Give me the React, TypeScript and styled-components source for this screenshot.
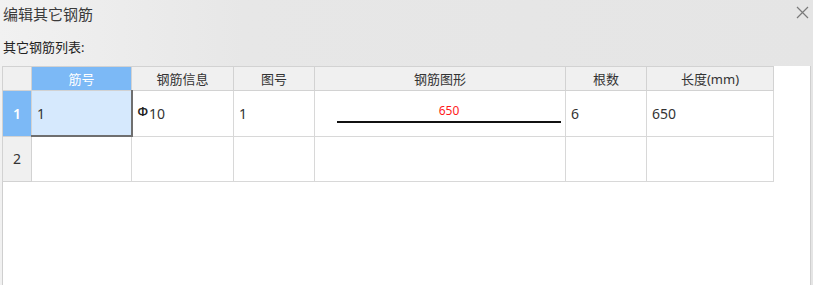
import React from "react";
import styled, { createGlobalStyle } from "styled-components";

const GlobalStyle = createGlobalStyle`
  html, body {
    margin: 0;
    padding: 0;
    background: #e6e6e6;
  }
  body {
    font-family: "Noto Sans", "Noto Sans CJK SC", sans-serif;
    color: #333;
  }
`;

type Row = {
  no: string;
  bar: string;
  grade?: boolean;
  fig: string;
  shape?: string;
  count: string;
  length: string;
};

const rows: Row[] = [
  { no: "1", bar: "10", grade: true, fig: "1", shape: "650", count: "6", length: "650" },
  { no: "", bar: "", fig: "", count: "", length: "" },
];

const columns = [
  { title: "", width: 29 },
  { title: "筋号", width: 100 },
  { title: "钢筋信息", width: 102 },
  { title: "图号", width: 81 },
  { title: "钢筋图形", width: 251 },
  { title: "根数", width: 81 },
  { title: "长度(mm)", width: 127 },
];

export default function App() {
  return (
    <S.Dialog>
      <GlobalStyle />
      <S.TitleBar>
        <S.Title>编辑其它钢筋</S.Title>
        <S.Close>
          <svg width="13" height="13" viewBox="0 0 13 13">
            <path d="M1 1 L12 12 M12 1 L1 12" stroke="#7a7a7a" strokeWidth="1.2" fill="none" />
          </svg>
        </S.Close>
      </S.TitleBar>
      <S.Caption>其它钢筋列表:</S.Caption>
      <S.Panel>
        <S.Grid>
          <colgroup>
            {columns.map((c, i) => (
              <col key={i} style={{ width: c.width }} />
            ))}
          </colgroup>
          <thead>
            <tr>
              {columns.map((c, i) => (
                <S.Head key={i} $active={i === 1}>
                  {c.title}
                </S.Head>
              ))}
            </tr>
          </thead>
          <tbody>
            {rows.map((r, i) => (
              <tr key={i}>
                <S.RowHead $active={i === 0}>{i + 1}</S.RowHead>
                <S.Cell $selected={i === 0}>{r.no}</S.Cell>
                <S.Cell>
                  {r.grade && <S.Grade>Φ</S.Grade>}
                  {r.bar}
                </S.Cell>
                <S.Cell>{r.fig}</S.Cell>
                <S.ShapeCell>
                  {r.shape && (
                    <svg width="251" height="44" viewBox="0 0 251 44">
                      <text
                        x="134"
                        y="24"
                        textAnchor="middle"
                        fill="#ff1a1a"
                        fontSize="12"
                        fontFamily="Noto Sans, sans-serif"
                      >
                        {r.shape}
                      </text>
                      <line x1="22" y1="31" x2="246" y2="31" stroke="#111" strokeWidth="2" />
                    </svg>
                  )}
                </S.ShapeCell>
                <S.Cell>{r.count}</S.Cell>
                <S.Cell>{r.length}</S.Cell>
              </tr>
            ))}
          </tbody>
        </S.Grid>
      </S.Panel>
    </S.Dialog>
  );
}

const S = {
  Dialog: styled.div`
    width: 813px;
    height: 285px;
    overflow: hidden;
    display: flex;
    flex-direction: column;
    background: linear-gradient(90deg, #f1f1f1 0%, #e7e7e7 30%, #e5e5e5 100%);
  `,
  TitleBar: styled.div`
    height: 26px;
    display: flex;
    align-items: center;
    justify-content: space-between;
    padding: 0 4px 0 3px;
  `,
  Title: styled.div`
    font-size: 15px;
    color: #3a3a3a;
  `,
  Close: styled.div`
    display: flex;
    align-items: center;
    margin-top: -2px;
  `,
  Caption: styled.div`
    height: 40px;
    display: flex;
    align-items: center;
    padding-left: 3px;
    font-size: 13px;
    color: #222;
  `,
  Panel: styled.div`
    flex: 1;
    margin: 0 2px;
    background: #fff;
    border-left: 1px solid #cfcfcf;
    border-right: 1px solid #cfcfcf;
  `,
  Grid: styled.table`
    border-collapse: collapse;
    table-layout: fixed;
    width: 771px;
    margin-left: -1px;
  `,
  Head: styled.th<{ $active?: boolean }>`
    height: 23px;
    padding: 0;
    font-size: 13px;
    font-weight: normal;
    text-align: center;
    color: ${(p) => (p.$active ? "#fff" : "#333")};
    background: ${(p) => (p.$active ? "#7cb9f6" : "#f0f0f0")};
    border: 1px solid #d2d2d2;
  `,
  RowHead: styled.td<{ $active?: boolean }>`
    height: 44px;
    padding: 0;
    text-align: center;
    font-size: 14px;
    font-weight: ${(p) => (p.$active ? 600 : 400)};
    color: ${(p) => (p.$active ? "#fff" : "#333")};
    background: ${(p) => (p.$active ? "#7cb9f6" : "#f0f0f0")};
    border: 1px solid #d2d2d2;
  `,
  Cell: styled.td<{ $selected?: boolean }>`
    height: 44px;
    padding: 0 0 0 5px;
    font-size: 14px;
    color: #333;
    white-space: nowrap;
    background: ${(p) => (p.$selected ? "#d6e9fd" : "#fff")};
    border: 1px solid #d8d8d8;
    ${(p) =>
      p.$selected &&
      `
      border-right: 2px solid #6f6f6f;
      border-bottom: 2px solid #6f6f6f;
    `}
  `,
  ShapeCell: styled.td`
    height: 44px;
    padding: 0;
    border: 1px solid #d8d8d8;
    line-height: 0;
    svg {
      display: block;
    }
  `,
  Grade: styled.span`
    font-size: 12px;
    font-weight: 600;
    position: relative;
    top: -3px;
    margin-right: 1px;
    color: #222;
  `,
};
